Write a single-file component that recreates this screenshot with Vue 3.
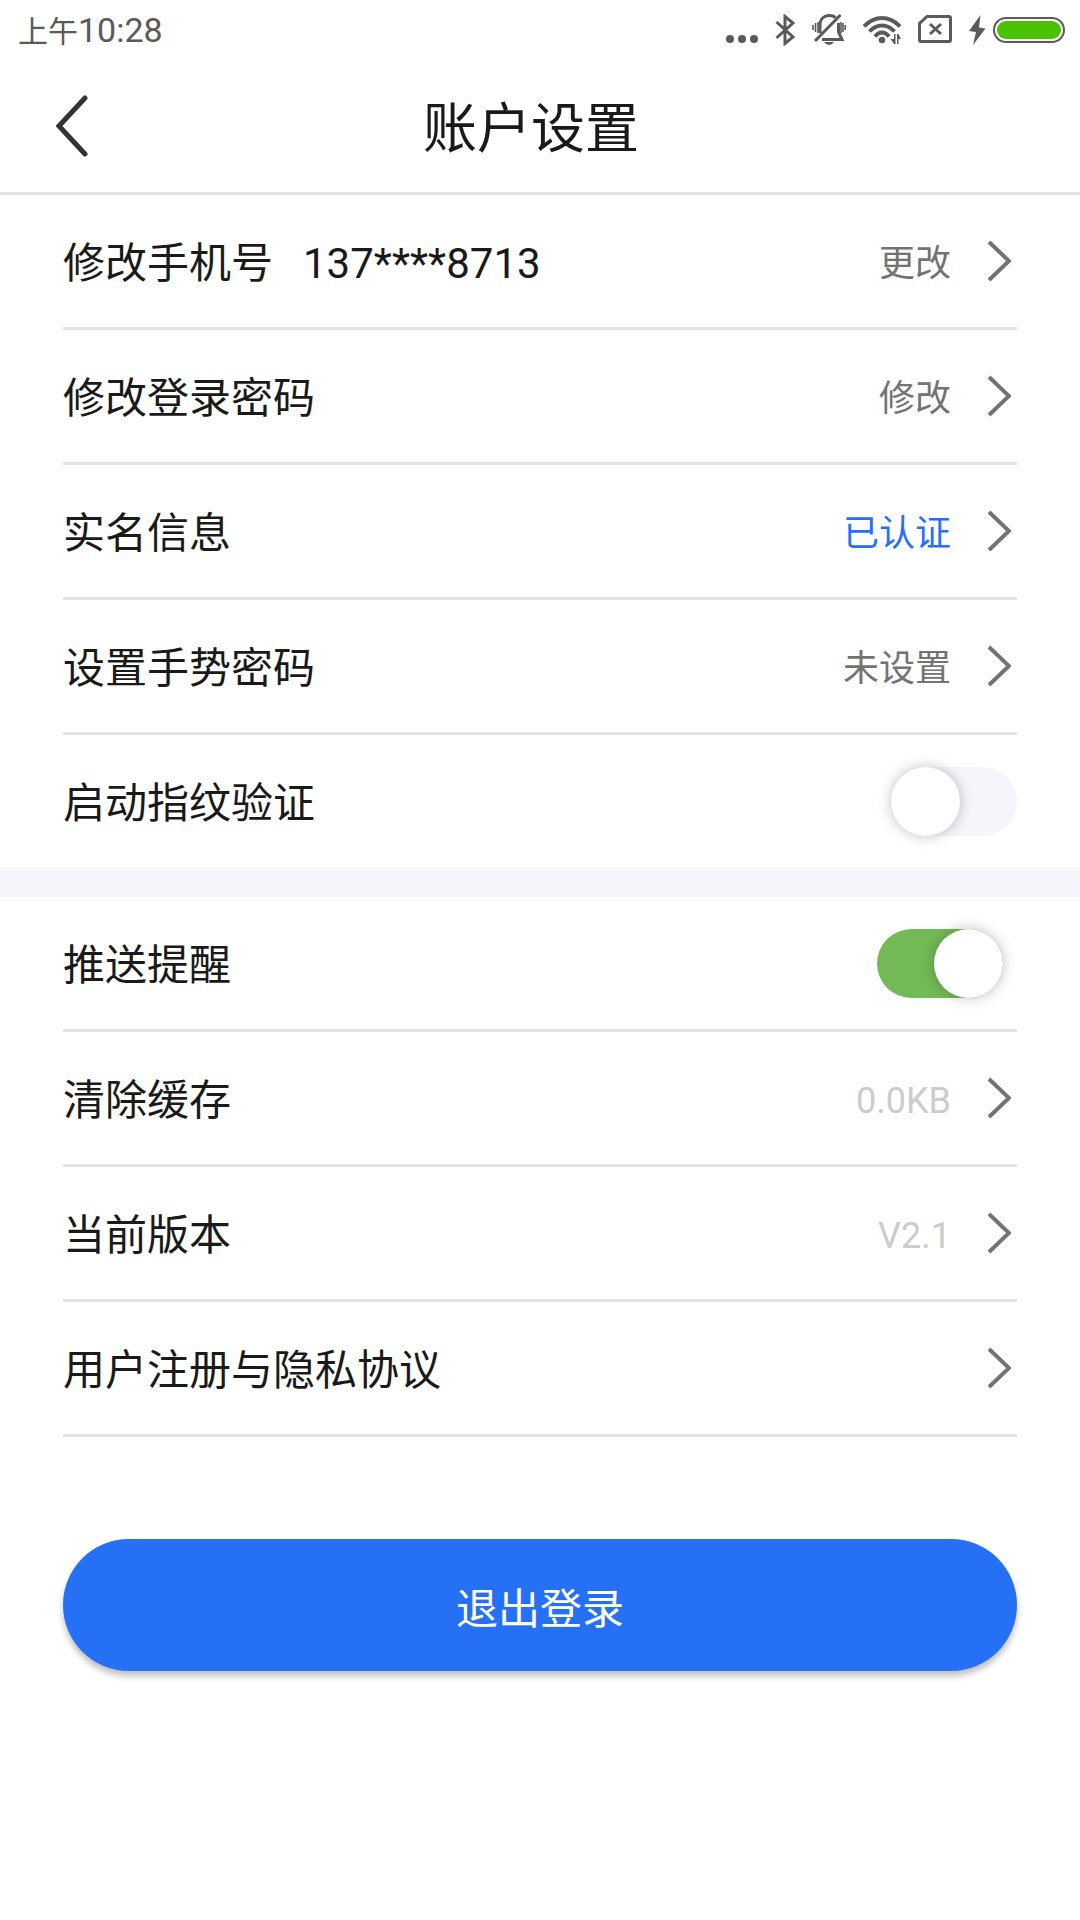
<script setup>
import { reactive } from 'vue'

const accountRows = [
  { label: '修改手机号', extra: '137****8713', value: '更改' },
  { label: '修改登录密码', value: '修改' },
  { label: '实名信息', value: '已认证', type: 'active' },
  { label: '设置手势密码', value: '未设置' }
]

const systemRows = [
  { label: '清除缓存', value: '0.0KB', type: 'light' },
  { label: '当前版本', value: 'V2.1', type: 'light' },
  { label: '用户注册与隐私协议' }
]

const switches = reactive({
  fingerprint: false,
  push: true
})
</script>

<template>
  <div class="page">
    <div class="status-bar">
      <div class="clock"><span class="period">上午</span>10:28</div>
      <div class="status-icons">
        <svg class="dots" width="32" height="32" viewBox="0 0 32 32">
          <circle cx="4" cy="25" r="4"/>
          <circle cx="16" cy="25" r="4"/>
          <circle cx="28" cy="25" r="4"/>
        </svg>
        <!-- 蓝牙 -->
        <svg width="20" height="32" viewBox="0 0 20 32">
          <path class="line" d="M1.5 8 L18 23 L10 29.5 V2.5 L18 9 L1.5 24"/>
        </svg>
        <!-- 静音 -->
        <svg width="34" height="32" viewBox="0 0 34 32">
          <path class="line" d="M8 19 V11 C8 5 12 1.5 17.5 1.5 C20 1.5 22 2.2 23.5 3.5 M26.5 9 V18 L30 25.5 H10 M3 27 L28.5 1"/>
          <path class="thin" d="M1 11 V16 M3.5 9 V18 M6 8 V19 M29 8 V19 M31 9 V18 M33.2 11 V16"/>
          <path d="M12 28 H22 Q20 31 17 31 Q14 31 12 28 Z"/>
        </svg>
        <!-- 无线网络 -->
        <svg width="38" height="32" viewBox="0 0 38 32">
          <path class="line wave" d="M1 12.5 Q9 4 19 4 Q29 4 37 12.5 M6.5 17.5 Q12 11.5 19 11.5 Q26 11.5 31.5 17.5 M12 22.5 Q15 18.5 19 18.5 Q23 18.5 26 22.5"/>
          <circle cx="19" cy="26" r="3.3"/>
          <path d="M31 20 H32.5 V30 H31 L27.5 25 H31 Z M34 30 H35.5 V25 H38 L35.5 20 H34 Z"/>
        </svg>
        <!-- 无SIM卡 -->
        <svg width="34" height="32" viewBox="0 0 34 32">
          <path class="line" d="M9 2.5 H31 Q32.5 2.5 32.5 4 V26 Q32.5 27.5 31 27.5 H3 Q1.5 27.5 1.5 26 V9.5 Z M12 10 L23 20 M23 10 L12 20"/>
        </svg>
        <div class="battery">
          <svg width="17" height="32" viewBox="0 0 17 32">
            <path d="M11.5 1 L0 17 L7 18 L4 31 L16.5 14.5 L10 13.5 Z"/>
          </svg>
          <svg width="72" height="32" viewBox="0 0 72 32">
            <rect class="shell" x="1" y="4" width="70" height="24" rx="12"/>
            <rect class="charge" x="4" y="7" width="64" height="18" rx="9"/>
          </svg>
        </div>
      </div>
    </div>

    <header class="nav-bar">
      <button class="back" type="button" aria-label="返回">
        <svg width="32" height="62" viewBox="0 0 32 62">
          <path d="M29 3 L3 31 L29 59"/>
        </svg>
      </button>
      <h1>账户设置</h1>
    </header>

    <section class="group">
      <button v-for="row in accountRows" :key="row.label" class="row" type="button">
        <span class="label">{{ row.label }}</span>
        <span v-if="row.extra" class="extra">{{ row.extra }}</span>
        <span class="value" :class="row.type">{{ row.value }}</span>
        <svg class="arrow" width="24" height="42" viewBox="0 0 24 42">
          <path d="M2 2 L22 21 L2 40"/>
        </svg>
      </button>
      <label class="row last">
        <span class="label">启动指纹验证</span>
        <input v-model="switches.fingerprint" class="switch" type="checkbox">
      </label>
    </section>

    <section class="group">
      <label class="row">
        <span class="label">推送提醒</span>
        <input v-model="switches.push" class="switch" type="checkbox">
      </label>
      <button v-for="row in systemRows" :key="row.label" class="row" type="button">
        <span class="label">{{ row.label }}</span>
        <span class="value" :class="row.type">{{ row.value }}</span>
        <svg class="arrow" width="24" height="42" viewBox="0 0 24 42">
          <path d="M2 2 L22 21 L2 40"/>
        </svg>
      </button>
    </section>

    <div class="footer">
      <button class="logout" type="button">退出登录</button>
    </div>
  </div>
</template>

<style>
body {
  background: #fff;
}
</style>

<style scoped>
.page {
  min-height: 100vh;
  background: #fff;
  color: #1a1a1a;
  font-family: Roboto, "Noto Sans CJK SC", sans-serif;
}

button {
  box-sizing: content-box;
  padding: 0;
  border: 0;
  background: none;
  color: inherit;
  font-family: inherit;
  cursor: pointer;
}

svg {
  display: block;
  flex: none;
}

.status-bar {
  display: flex;
  align-items: center;
  justify-content: space-between;
  height: 60px;
  padding: 0 15px 0 18px;
  color: #5a5a5a;
}

.clock {
  padding-top: 2px;
  font-size: 34px;
  line-height: 48px;
}

.period {
  font-size: 30px;
}

.status-icons {
  display: flex;
  gap: 17px;
}

.status-icons svg {
  fill: #5a5a5a;
}

.status-icons .line,
.status-icons .thin,
.status-icons .shell {
  fill: none;
  stroke: #5a5a5a;
  stroke-width: 3;
}

.status-icons .wave {
  stroke-width: 4;
}

.status-icons .thin {
  stroke-width: 1.6;
}

.status-icons .shell {
  stroke-width: 2;
}

.status-icons .charge {
  fill: #4ac200;
}

.battery {
  display: flex;
  gap: 7px;
}

.nav-bar {
  display: grid;
  grid-template-columns: 102px 1fr 120px;
  align-items: center;
  height: 132px;
  border-bottom: 3px solid #e4e4e4;
}

.back {
  padding-left: 56px;
}

.back path {
  fill: none;
  stroke: #333;
  stroke-width: 5;
  stroke-linecap: round;
}

h1 {
  margin: 0;
  padding-top: 8px;
  font-size: 54px;
  font-weight: 400;
  line-height: 72px;
  text-align: center;
}

.group {
  padding: 0 63px;
}

.group + .group {
  border-top: 30px solid #f4f6fb;
}

.row {
  display: flex;
  align-items: center;
  width: 100%;
  min-height: 132px;
  border-bottom: 3px solid #e4e4e4;
  font-size: 42px;
  line-height: 60px;
  text-align: left;
  cursor: pointer;
}

.row.last {
  border-bottom: 0;
}

.label,
.extra,
.value {
  padding-top: 6px;
}

.extra {
  margin-left: 30px;
}

.value {
  margin-left: auto;
  color: #737373;
  font-size: 36px;
}

.value.active {
  color: #2670f6;
}

.value.light {
  color: #ccc;
}

.arrow {
  margin: 0 6px 0 36px;
}

.arrow path {
  fill: none;
  stroke: #737373;
  stroke-width: 4;
}

.switch {
  display: flex;
  flex: none;
  appearance: none;
  width: 126px;
  height: 69px;
  margin: 0 0 0 auto;
  border-radius: 35px;
  background: #f4f6fb;
  cursor: pointer;
}

.switch::before {
  content: "";
  width: 69px;
  height: 69px;
  border-radius: 50%;
  background: #fff;
  box-shadow: 0 0 14px rgba(0, 0, 0, .25);
}

.switch:checked {
  justify-content: flex-end;
  margin-right: 14px;
  background: #73ba56;
}

.footer {
  padding: 102px 63px;
}

.logout {
  display: block;
  width: 100%;
  height: 132px;
  border-radius: 66px;
  background: #2670f6;
  box-shadow: 0 5px 6px rgba(0, 0, 0, .25);
  color: #fff;
  font-size: 42px;
}
</style>
